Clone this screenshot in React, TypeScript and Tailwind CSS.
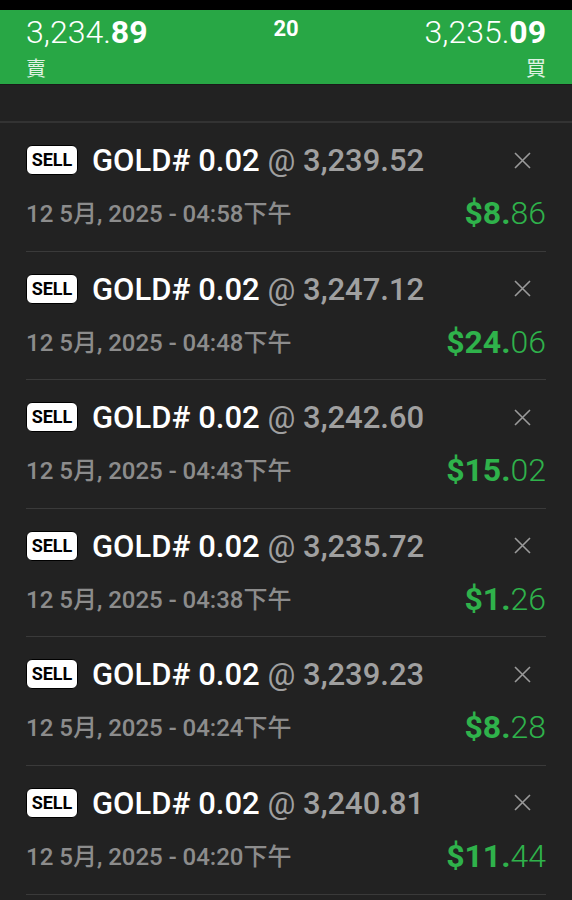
import React from "react";

const trades = [
  { price: "3,239.52", time: "04:58", whole: "8", cents: "86" },
  { price: "3,247.12", time: "04:48", whole: "24", cents: "06" },
  { price: "3,242.60", time: "04:43", whole: "15", cents: "02" },
  { price: "3,235.72", time: "04:38", whole: "1", cents: "26" },
  { price: "3,239.23", time: "04:24", whole: "8", cents: "28" },
  { price: "3,240.81", time: "04:20", whole: "11", cents: "44" },
];

const font = { fontFamily: "Roboto, 'Noto Sans CJK TC', sans-serif" };
const light = { fontFamily: "'Roboto Light', Roboto, sans-serif", fontWeight: 300 };
const medium = { fontFamily: "'Roboto Medium', Roboto, 'Noto Sans CJK TC', sans-serif", fontWeight: 500 };

function Quote({ main, bold, label, right }: { main: string; bold: string; label: string; right?: boolean }) {
  return (
    <div className={`flex flex-col ${right ? "items-end" : "items-start"}`}>
      <div className="text-[32px] leading-none text-white whitespace-nowrap">
        <span style={light}>{main}</span>
        <span className="font-bold">{bold}</span>
      </div>
      <div className="mt-[11px] text-[20px] leading-none text-white/85">{label}</div>
    </div>
  );
}

function TradeRow({ price, time, whole, cents }: (typeof trades)[number]) {
  return (
    <div className="h-[128.6px] mx-[26px] border-b border-[#3a3a3a] flex flex-col">
      <div className="mt-[22px] h-[30px] flex items-center">
        <div className="w-[52px] h-[30px] rounded-[6px] bg-white border-[1.5px] border-black flex items-center justify-center text-[18px] leading-none font-bold text-black">
          SELL
        </div>
        <div className="ml-[14px] mt-[1px] text-[31px] leading-none text-white whitespace-nowrap" style={medium}>
          GOLD# 0.02{" "}
          <span className="text-[#a0a0a0]" style={{ fontWeight: 400, fontFamily: "Roboto, sans-serif" }}>
            @
          </span>{" "}
          <span className="text-[#a0a0a0]">{price}</span>
        </div>
        <svg className="ml-auto mr-[15px]" width="17" height="17" viewBox="0 0 17 17">
          <path d="M1 1L16 16M16 1L1 16" stroke="#9a9a9a" strokeWidth="1.6" />
        </svg>
      </div>
      <div className="mt-[21px] h-[34px] flex items-center justify-between">
        <div className="mt-[2px] text-[24px] leading-none text-[#8c8c8c] whitespace-nowrap" style={medium}>
          12 5月, 2025 - {time}下午
        </div>
        <div className="text-[32px] leading-none text-[#2fb24b] whitespace-nowrap">
          <span className="font-bold">${whole}.</span>
          <span style={light}>{cents}</span>
        </div>
      </div>
    </div>
  );
}

export default function App() {
  return (
    <div className="w-[572px] h-[900px] overflow-hidden bg-[#222222]" style={font}>
      <div className="h-[10px] bg-black" />
      <div className="h-[74px] bg-[#28a745] px-[26px] pt-[6px] flex justify-between items-start">
        <Quote main="3,234." bold="89" label="賣" />
        <div className="mt-[2px] text-[22px] leading-none font-bold text-white">20</div>
        <Quote main="3,235." bold="09" label="買" right />
      </div>
      <div className="h-[1px] bg-[#1a1a1a]" />
      <div className="h-[38px] border-b-2 border-[#333333]" />
      {trades.map((t) => (
        <TradeRow key={t.time} {...t} />
      ))}
    </div>
  );
}
